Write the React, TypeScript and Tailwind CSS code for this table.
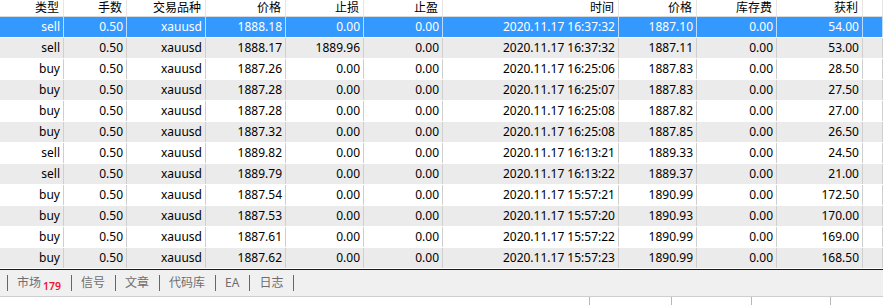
import React from "react";

type Order = {
  type: string;
  lots: string;
  symbol: string;
  price: string;
  sl: string;
  tp: string;
  time: string;
  cur: string;
  swap: string;
  profit: string;
};

const orders: Order[] = [
  { type: "sell", lots: "0.50", symbol: "xauusd", price: "1888.18", sl: "0.00", tp: "0.00", time: "2020.11.17 16:37:32", cur: "1887.10", swap: "0.00", profit: "54.00" },
  { type: "sell", lots: "0.50", symbol: "xauusd", price: "1888.17", sl: "1889.96", tp: "0.00", time: "2020.11.17 16:37:32", cur: "1887.11", swap: "0.00", profit: "53.00" },
  { type: "buy", lots: "0.50", symbol: "xauusd", price: "1887.26", sl: "0.00", tp: "0.00", time: "2020.11.17 16:25:06", cur: "1887.83", swap: "0.00", profit: "28.50" },
  { type: "buy", lots: "0.50", symbol: "xauusd", price: "1887.28", sl: "0.00", tp: "0.00", time: "2020.11.17 16:25:07", cur: "1887.83", swap: "0.00", profit: "27.50" },
  { type: "buy", lots: "0.50", symbol: "xauusd", price: "1887.28", sl: "0.00", tp: "0.00", time: "2020.11.17 16:25:08", cur: "1887.82", swap: "0.00", profit: "27.00" },
  { type: "buy", lots: "0.50", symbol: "xauusd", price: "1887.32", sl: "0.00", tp: "0.00", time: "2020.11.17 16:25:08", cur: "1887.85", swap: "0.00", profit: "26.50" },
  { type: "sell", lots: "0.50", symbol: "xauusd", price: "1889.82", sl: "0.00", tp: "0.00", time: "2020.11.17 16:13:21", cur: "1889.33", swap: "0.00", profit: "24.50" },
  { type: "sell", lots: "0.50", symbol: "xauusd", price: "1889.79", sl: "0.00", tp: "0.00", time: "2020.11.17 16:13:22", cur: "1889.37", swap: "0.00", profit: "21.00" },
  { type: "buy", lots: "0.50", symbol: "xauusd", price: "1887.54", sl: "0.00", tp: "0.00", time: "2020.11.17 15:57:21", cur: "1890.99", swap: "0.00", profit: "172.50" },
  { type: "buy", lots: "0.50", symbol: "xauusd", price: "1887.53", sl: "0.00", tp: "0.00", time: "2020.11.17 15:57:20", cur: "1890.93", swap: "0.00", profit: "170.00" },
  { type: "buy", lots: "0.50", symbol: "xauusd", price: "1887.61", sl: "0.00", tp: "0.00", time: "2020.11.17 15:57:22", cur: "1890.99", swap: "0.00", profit: "169.00" },
  { type: "buy", lots: "0.50", symbol: "xauusd", price: "1887.62", sl: "0.00", tp: "0.00", time: "2020.11.17 15:57:23", cur: "1890.99", swap: "0.00", profit: "168.50" },
];

const headers = ["类型", "手数", "交易品种", "价格", "止损", "止盈", "时间", "价格", "库存费", "获利", ""];

const cols = "grid grid-cols-[64px_63px_79px_80px_78px_79px_176px_78px_80px_86px_1fr]";

const tabs = ["信号", "文章", "代码库", "EA", "日志"];

export default function App() {
  return (
    <div
      className="w-[883px] h-[305px] overflow-hidden bg-white text-[12px] text-black"
      style={{ fontFamily: '"Noto Sans", "Noto Sans CJK SC", sans-serif' }}
    >
      <div className={`${cols} h-[17px] border-b border-[#dadada]`}>
        {headers.map((h, i) => (
          <div
            key={i}
            className="flex items-center justify-end pr-[4px] border-r border-[#e6e6e6] leading-none"
          >
            {h}
          </div>
        ))}
      </div>

      {orders.map((o, i) => {
        const selected = i === 0;
        const bg = selected ? "bg-[#3399ff] text-white" : i % 2 === 1 ? "bg-[#ebebeb]" : "bg-white";
        const cells = [o.type, o.lots, o.symbol, o.price, o.sl, o.tp, o.time, o.cur, o.swap, o.profit, ""];
        return (
          <div key={i} className={`${cols} h-[21px] border-b border-white ${bg}`}>
            {cells.map((c, j) => (
              <div
                key={j}
                className={`flex items-center justify-end pr-[3px] border-r leading-none ${
                  selected ? "border-[#bcdcff]" : "border-[#cfcfcf]"
                }`}
              >
                {c}
              </div>
            ))}
          </div>
        );
      })}

      <div className="h-px bg-[#1a1a1a]" />

      <div className="h-[26px] bg-[#f0f0f0] flex items-center pl-[7px] text-[#6e6e6e]">
        <div className="w-px h-[16px] bg-[#666]" />
        <div className="flex items-baseline pl-[9px] pr-[10px]">
          <span>市场</span>
          <span className="ml-[2px] text-[10.5px] font-semibold text-[#f0142d] translate-y-[3px]">179</span>
        </div>
        {tabs.map((t) => (
          <React.Fragment key={t}>
            <div className="w-px h-[16px] bg-[#666]" />
            <div className="pl-[9px] pr-[10px]">{t}</div>
          </React.Fragment>
        ))}
        <div className="w-px h-[16px] bg-[#666]" />
      </div>

      <div className="h-px bg-[#cfcfcf]" />
      <div className="h-[8px] bg-white flex">
        <div className="w-[590px] border-r border-[#b8b8b8]" />
        <div className="w-[82px] border-r border-[#b8b8b8]" />
        <div className="w-[80px] border-r border-[#b8b8b8]" />
        <div className="w-[79px] border-r border-[#b8b8b8]" />
      </div>
    </div>
  );
}
